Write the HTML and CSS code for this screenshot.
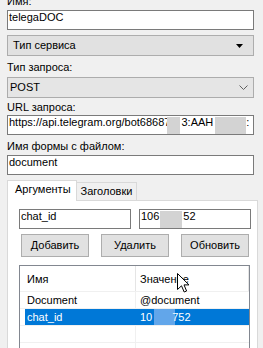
FILE: index.html
```html
<!DOCTYPE html>
<html lang="ru">
<head>
    <meta charset="UTF-8">
    <title>telegaDOC</title>
    <link rel="stylesheet" href="styles.css">
</head>
<body>
    <div class="form">
        <div class="label first">Имя:</div>
        <div class="textbox">telegaDOC</div>

        <div class="combo flat">
            <span>Тип сервиса</span>
            <svg width="7" height="4" viewBox="0 0 7 4"><polygon points="0,0 7,0 3.5,4" fill="#000"/></svg>
        </div>

        <div class="label l2">Тип запроса:</div>
        <div class="combo post">
            <span>POST</span>
            <svg width="9" height="5" viewBox="0 0 9 5"><polyline points="0.5,0.5 4.5,4.5 8.5,0.5" fill="none" stroke="#606060" stroke-width="1"/></svg>
        </div>

        <div class="label l3">URL запроса:</div>
        <div class="textbox tight">https://api.telegram.org/bot68687<span class="redact r1"></span>3:AAH<span class="redact r2"></span>:</div>

        <div class="label l4">Имя формы с файлом:</div>
        <div class="textbox t4">document</div>

        <div class="tabs">
            <div class="tab-strip">
                <div class="tab active">Аргументы</div>
                <div class="tab">Заголовки</div>
            </div>
            <div class="tab-panel">
                <div class="arg-row">
                    <div class="textbox">chat_id</div>
                    <div class="textbox">106<span class="redact r3"></span>52</div>
                </div>
                <div class="btn-row">
                    <div class="button">Добавить</div>
                    <div class="button">Удалить</div>
                    <div class="button">Обновить</div>
                </div>
                <div class="listview">
                    <div class="lv-header">
                        <div class="hcell c1">Имя</div>
                        <div class="hcell c2">Значение</div>
                    </div>
                    <div class="lv-row">
                        <div class="cell c1">Document</div>
                        <div class="cell c2">@document</div>
                    </div>
                    <div class="lv-row selected">
                        <div class="cell c1">chat_id</div>
                        <div class="cell c2">10<span class="redact r4"></span>752</div>
                    </div>
                    <div class="lv-row">
                        <div class="cell c1"></div>
                        <div class="cell c2"></div>
                    </div>
                    <div class="lv-row">
                        <div class="cell c1"></div>
                        <div class="cell c2"></div>
                    </div>
                </div>
            </div>
        </div>
    </div>

    <svg class="cursor" width="13" height="20" viewBox="0 0 13 20">
        <path d="M0.5,0.5 L0.5,16.5 L4.5,12.8 L7.2,19 L9.6,18 L7,11.9 L12,11.9 Z" fill="#fff" stroke="#000" stroke-width="1" stroke-linejoin="miter"/>
    </svg>
</body>
</html>
```

FILE: styles.css
```css
* {
    box-sizing: border-box;
}

body {
    margin: 0;
    width: 263px;
    height: 348px;
    overflow: hidden;
    position: relative;
    background: #f0f0f0;
    color: #000;
    font-family: "Liberation Sans", Arial, sans-serif;
    font-size: 11px;
    line-height: 13px;
}

/* Formular */
.form {
    display: flex;
    flex-direction: column;
    margin-top: -5px;
    padding: 0 9px 0 7px;
}

.label {
    height: 13px;
    white-space: nowrap;
}

.label.first { margin-bottom: 2px; }
.label.l2 { margin-top: 5px; margin-bottom: 3px; }
.label.l3 { margin-top: 3px; margin-bottom: 1px; }
.label.l4 { margin-top: 5px; margin-bottom: 2px; }

.textbox {
    height: 20px;
    background: #fff;
    border: 1px solid #7a7a7a;
    padding: 0 1px;
    white-space: nowrap;
    overflow: hidden;
}

.redact {
    display: inline-block;
    vertical-align: top;
    height: 17px;
    margin-top: 1px;
    background: #d3d3d3;
}

.r1 { width: 13px; margin-left: -3px; margin-right: 1px; }
.r2 { width: 31px; margin-left: 2px; }
.r3 { width: 22px; margin-left: 1px; margin-right: 1px; }
.r4 { width: 21px; height: 16px; margin-top: 0; margin-left: 2px; margin-right: -3px; background: #62a6ea; }

/* Comboboxen */
.combo {
    height: 21px;
    display: flex;
    align-items: center;
    justify-content: space-between;
    background: #e1e1e1;
    border: 1px solid #adadad;
    line-height: 19px;
}

.combo.flat {
    margin-top: 5px;
    padding: 0 10px 0 5px;
}

.combo.post {
    padding: 0 5px 0 2px;
    background: #e5e5e5;
    border-color: #acacac;
}

/* Tabs */
.tabs {
    margin-top: 5px;
    margin-right: -4px;
}

.tab-strip {
    display: flex;
    align-items: flex-end;
    height: 20px;
}

.tab {
    height: 18px;
    padding: 0 4px 0 4px;
    line-height: 17px;
    border: 1px solid #d9d9d9;
    border-bottom: none;
    border-left: none;
    background: #f0f0f0;
    white-space: nowrap;
}

.tab.active {
    position: relative;
    z-index: 1;
    height: 21px;
    margin-bottom: -1px;
    padding: 0 5px 0 7px;
    line-height: 17px;
    background: #fff;
    border-left: 1px solid #d9d9d9;
}

.tab-panel {
    height: 160px;
    background: #fff;
    border: 1px solid #d9d9d9;
    padding: 8px 6px 0 11px;
}

.arg-row {
    display: flex;
    gap: 8px;
}

.arg-row .textbox {
    flex: 1;
}

.btn-row {
    display: flex;
    justify-content: space-between;
    margin-top: 5px;
    padding: 0 2px;
}

.button {
    width: 68px;
    height: 23px;
    line-height: 21px;
    text-align: center;
    background: #e1e1e1;
    border: 1px solid #adadad;
}

/* Liste */
.listview {
    margin-top: 8px;
    margin-right: 1px;
    height: 120px;
    background: #fff;
    border: 1px solid #828790;
}

.lv-header {
    display: flex;
    height: 26px;
    border-bottom: 1px solid #f0f0f0;
}

.hcell {
    line-height: 27px;
    border-right: 1px solid #e5e5e5;
}

.hcell.c1 {
    width: 116px;
    padding-left: 7px;
}

.hcell.c2 {
    width: 113px;
    padding-left: 4px;
}

.lv-row {
    display: flex;
    height: 17px;
    padding-left: 5px;
    border-bottom: 1px solid #f0f0f0;
    line-height: 16px;
    white-space: nowrap;
}

.cell.c1 {
    width: 111px;
    padding-left: 2px;
    border-right: 1px solid #f0f0f0;
}

.cell.c2 {
    flex: 1;
    padding-left: 4px;
}

.lv-row.selected {
    background: #0078d7;
    background-clip: content-box;
    color: #fff;
}

.lv-row.selected .cell.c1 {
    border-right-color: #0078d7;
}

.cursor {
    position: absolute;
    left: 177px;
    top: 273px;
}
```
